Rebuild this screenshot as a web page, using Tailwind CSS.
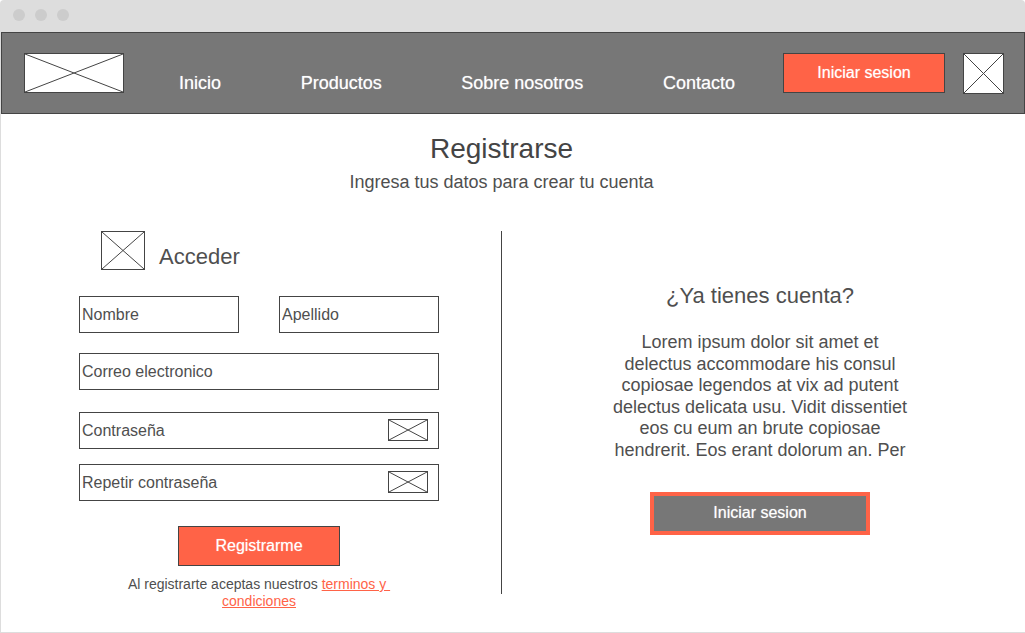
<!DOCTYPE html>
<html lang="es">
<head>
<meta charset="utf-8">
<meta name="viewport" content="width=device-width, initial-scale=1">
<title>Registrarse</title>
<script src="https://cdn.jsdelivr.net/npm/@tailwindcss/browser@4"></script>
</head>
<body class="flex min-h-screen flex-col bg-white font-['Liberation_Sans',Arial,sans-serif] text-[#4f4f4f]">
  <div class="flex h-8 items-center gap-2.5 rounded-t-sm bg-[#ddd] px-[13px] pb-0.5" aria-hidden="true">
    <span class="size-3 rounded-full bg-[#ccc]"></span>
    <span class="size-3 rounded-full bg-[#ccc]"></span>
    <span class="size-3 rounded-full bg-[#ccc]"></span>
  </div>

  <div class="flex flex-1 flex-col border-b border-l border-[#ddd]">
    <header class="flex items-start border border-[#444] bg-[#777] pt-5 pr-5 pb-[19px] pl-[22px]">
      <a href="#" aria-label="Logo" class="h-10 w-[100px] shrink-0 border border-[#444] bg-white">
        <svg class="block size-full" viewBox="0 0 98 38" preserveAspectRatio="none" fill="none" stroke="#444"><path d="M0 0L98 38M98 0L0 38"/></svg>
      </a>
      <nav class="mr-12 ml-[55px] flex flex-1 justify-between self-end pb-px text-lg/5 text-white [text-shadow:0_0_1px_#ffffff99]">
        <a href="#">Inicio</a>
        <a href="#">Productos</a>
        <a href="#">Sobre nosotros</a>
        <a href="#">Contacto</a>
      </nav>
      <button type="button" class="h-10 w-[162px] border border-[#444] bg-[#ff6347] text-base text-white [text-shadow:0_0_1px_#ffffff99]">Iniciar sesion</button>
      <a href="#" aria-label="Perfil" class="ml-[18px] size-[41px] shrink-0 border border-[#444] bg-white">
        <svg class="block size-full" viewBox="0 0 39 39" fill="none" stroke="#444"><path d="M0 0L39 39M39 0L0 39"/></svg>
      </a>
    </header>

    <main class="pt-[17px] pr-[23px] pb-[21px]">
      <div class="text-center">
        <h1 class="text-[28px]/9 text-[#444]">Registrarse</h1>
        <p class="mt-[3px] text-lg/6">Ingresa tus datos para crear tu cuenta</p>
      </div>

      <div class="mt-[37px] grid grid-cols-[1fr_1px_1fr]">
        <form class="pr-[62px] pl-[78px]">
          <div class="flex items-start pl-[22px]">
            <svg class="h-[39px] w-11 border border-[#444]" viewBox="0 0 42 37" fill="none" stroke="#444" aria-hidden="true"><path d="M0 0L42 37M42 0L0 37"/></svg>
            <h2 class="ml-3.5 pt-3 text-[22px]/7">Acceder</h2>
          </div>
          <div class="mt-[25px] grid grid-cols-2 gap-10">
            <input type="text" aria-label="Nombre" placeholder="Nombre" class="h-[37px] w-full min-w-0 border border-[#444] px-0.5 text-base placeholder:text-[#4f4f4f]">
            <input type="text" aria-label="Apellido" placeholder="Apellido" class="h-[37px] w-full min-w-0 border border-[#444] px-0.5 text-base placeholder:text-[#4f4f4f]">
          </div>
          <input type="email" aria-label="Correo electronico" placeholder="Correo electronico" class="mt-5 block h-[37px] w-full border border-[#444] px-0.5 text-base placeholder:text-[#4f4f4f]">
          <div class="mt-[22px] flex h-[37px] items-start border border-[#444] pr-2.5">
            <input type="password" aria-label="Contraseña" placeholder="Contraseña" class="h-full min-w-0 flex-1 px-0.5 text-base placeholder:text-[#4f4f4f]">
            <button type="button" aria-label="Mostrar contraseña" class="mt-1.5 h-[22px] w-10 border border-[#444]">
              <svg class="block size-full" viewBox="0 0 38 20" fill="none" stroke="#444"><path d="M0 0L38 20M38 0L0 20"/></svg>
            </button>
          </div>
          <div class="mt-[15px] flex h-[37px] items-start border border-[#444] pr-2.5">
            <input type="password" aria-label="Repetir contraseña" placeholder="Repetir contraseña" class="h-full min-w-0 flex-1 px-0.5 text-base placeholder:text-[#4f4f4f]">
            <button type="button" aria-label="Mostrar contraseña repetida" class="mt-1.5 h-[22px] w-10 border border-[#444]">
              <svg class="block size-full" viewBox="0 0 38 20" fill="none" stroke="#444"><path d="M0 0L38 20M38 0L0 20"/></svg>
            </button>
          </div>
          <button type="submit" class="mx-auto mt-[25px] block h-10 w-[162px] border border-[#444] bg-[#ff6347] text-base text-white [text-shadow:0_0_1px_#ffffff99]">Registrarme</button>
          <p class="mt-2.5 text-center text-sm/[17px]">Al registrarte aceptas nuestros <a href="#" class="text-[#ff6347] underline">terminos y&nbsp;<br>condiciones</a></p>
        </form>

        <div class="mb-4 bg-[#444]"></div>

        <section class="flex flex-col items-center pt-[51px] pl-4 text-center">
          <h2 class="text-[22px]/7">¿Ya tienes cuenta?</h2>
          <p class="mt-[22px] max-w-[304px] text-lg/[1.2]">Lorem ipsum dolor sit amet et delectus accommodare his consul copiosae legendos at vix ad putent delectus delicata usu. Vidit dissentiet eos cu eum an brute copiosae hendrerit. Eos erant dolorum an. Per</p>
          <button type="button" class="mt-[30px] h-[43px] w-[220px] border-4 border-[#ff6347] bg-[#777] text-base text-white [text-shadow:0_0_1px_#ffffff99]">Iniciar sesion</button>
        </section>
      </div>
    </main>
  </div>
</body>
</html>
